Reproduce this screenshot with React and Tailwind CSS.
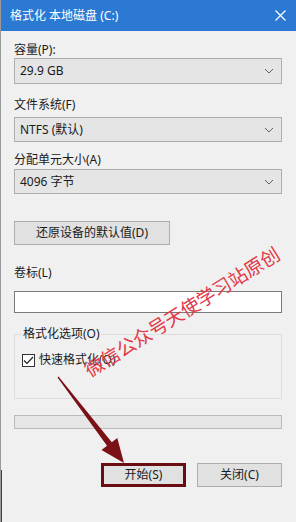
import React from 'react'

const font = { fontFamily: '"Noto Sans", "Noto Sans CJK SC", sans-serif' }

function Chevron() {
  return (
    <svg width="10" height="6" viewBox="0 0 10 6" className="shrink-0">
      <polyline points="1,1 5,5 9,1" fill="none" stroke="#606060" strokeWidth="1" />
    </svg>
  )
}

function Select({ value, h = 'h-[25px]' }) {
  return (
    <div className={`${h} flex items-center justify-between pl-[5px] pr-[7px] bg-[#e5e5e5] border border-[#adadad] text-[12px] text-[#1a1a1a]`}>
      <span>{value}</span>
      <Chevron />
    </div>
  )
}

function Label({ children, className = '' }) {
  return <div className={`text-[12px] leading-[16px] text-[#1a1a1a] ${className}`}>{children}</div>
}

export default function App() {
  return (
    <div style={font} className="relative w-[296px] h-[522px] overflow-hidden bg-[#f0f0f0] border-l border-[#9a9a9a]">
      {/* title bar */}
      <div className="h-[31px] flex items-center justify-between pl-[9px] pr-[10px] bg-[#2b79d3] text-white text-[12px]">
        <span>格式化 本地磁盘 (C:)</span>
        <svg width="11" height="11" viewBox="0 0 11 11">
          <path d="M0.5 0.5 L10.5 10.5 M10.5 0.5 L0.5 10.5" stroke="#fff" strokeWidth="1.2" />
        </svg>
      </div>

      <div className="flex flex-col pl-[13px] pr-[14px]">
        <Label className="mt-[11px]">容量(P):</Label>
        <Select value="29.9  GB" h="h-[26px]" />

        <Label className="mt-[13px]">文件系统(F)</Label>
        <div className="mt-[4px]">
          <Select value="NTFS (默认)" />
        </div>

        <Label className="mt-[10px]">分配单元大小(A)</Label>
        <div className="mt-[1px]">
          <Select value="4096 字节" />
        </div>

        <button className="mt-[27px] w-[156px] h-[24px] bg-[#e1e1e1] border border-[#adadad] text-[12px] text-[#1a1a1a]">
          还原设备的默认值(D)
        </button>

        <Label className="mt-[20px]">卷标(L)</Label>
        <div className="mt-[10px] h-[22px] bg-white border border-[#7a7a7a]" />

        <fieldset className="mt-[13px] h-[73px] border border-[#dcdcdc] px-[7px]">
          <legend className="px-[1px] text-[12px] leading-[16px] text-[#1a1a1a]">格式化选项(O)</legend>
          <div className="mt-[10px] flex items-center gap-[4px] text-[12px] leading-[16px] text-[#1a1a1a]">
            <div className="w-[13px] h-[13px] bg-white border border-[#333] flex items-center justify-center">
              <svg width="11" height="9" viewBox="0 0 11 9">
                <polyline points="1,4.5 4,7.5 10,1" fill="none" stroke="#222" strokeWidth="1.2" />
              </svg>
            </div>
            <span>快速格式化(Q)</span>
          </div>
        </fieldset>

        <div className="mt-[16px] h-[14px] bg-[#e6e6e6] border border-[#bcbcbc]" />

        <div className="mt-[34px] flex justify-end gap-[11px]">
          <button className="w-[85px] h-[24px] bg-[#e1e1e1] border-[3px] border-[#6a0d12] text-[12px] text-[#1a1a1a]">
            开始(S)
          </button>
          <button className="w-[85px] h-[24px] bg-[#e1e1e1] border border-[#adadad] text-[12px] text-[#1a1a1a]">
            关闭(C)
          </button>
        </div>
      </div>

      {/* watermark */}
      <div className="absolute left-[66px] top-[299px] w-[230px] text-center leading-[26px] text-[19px] tracking-[-0.2px] text-[#e23845] rotate-[-32deg] whitespace-nowrap pointer-events-none">
        微信公众号天使学习站原创
      </div>

      {/* arrow */}
      <svg className="absolute left-0 top-0 pointer-events-none" width="296" height="522" viewBox="0 0 296 522">
        <polygon
          points="57.5,376.6 110.8,442.2 116.3,437.9 123,463 100.5,450.1 106,445.8 56.5,377.4"
          fill="#7b1117"
        />
      </svg>

      <div className="absolute left-[-1px] top-[470px] w-[2px] h-[52px] bg-[#25466e]" />
    </div>
  )
}
